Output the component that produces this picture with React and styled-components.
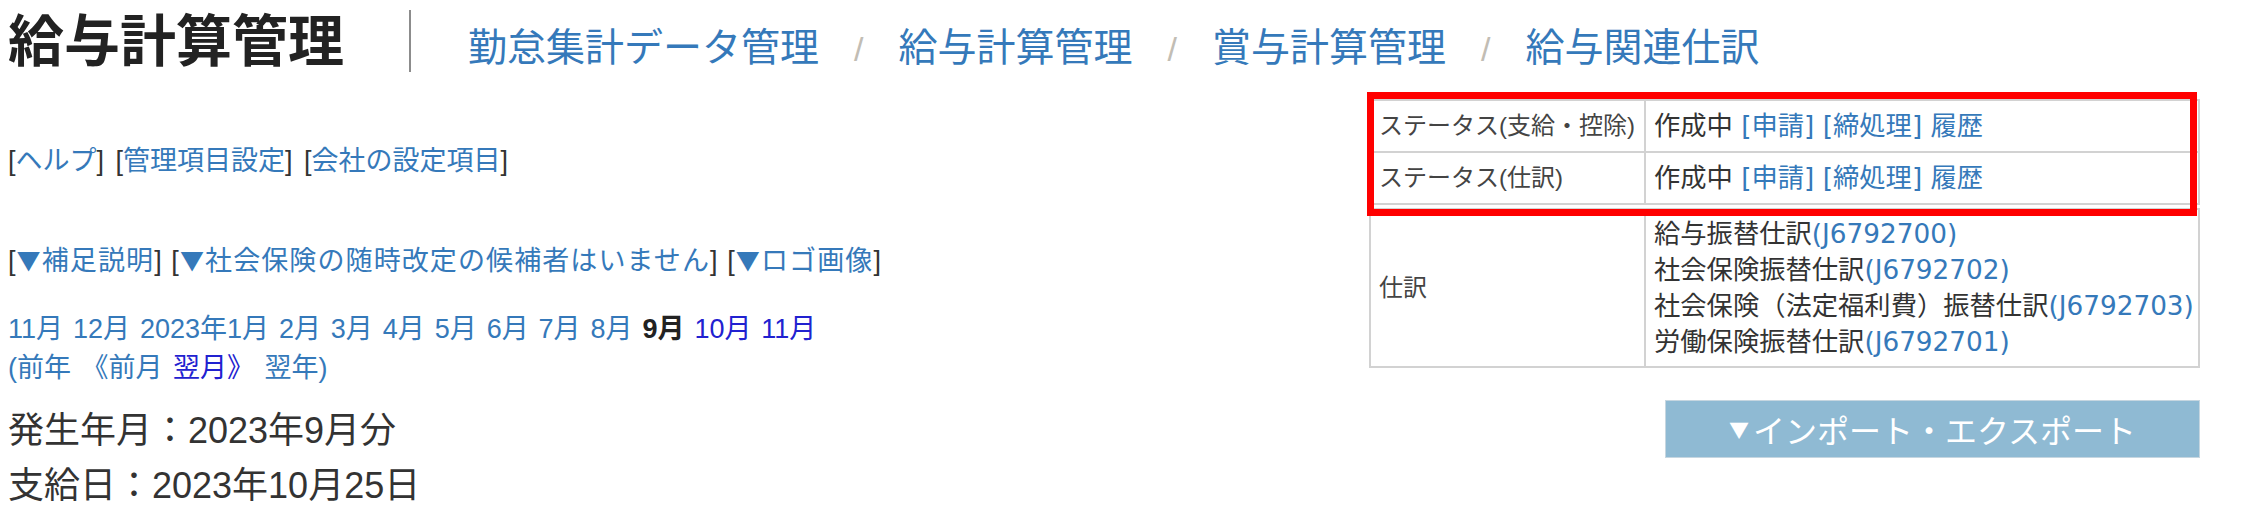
import styled, { createGlobalStyle } from 'styled-components'

const GlobalStyle = createGlobalStyle`
  body {
    margin: 0;
    background: #fff;
    color: #333;
    font-family: 'Liberation Sans', 'Noto Sans CJK JP', sans-serif;
  }
`

const Page = styled.div`
  width: 2241px;
  box-sizing: border-box;
  padding: 0 41px 0 8px;
`

const Header = styled.header`
  display: flex;
  align-items: flex-start;
  height: 80px;
`

const Title = styled.h1`
  margin: 14px 0 0;
  font-size: 56px;
  line-height: 55px;
  font-weight: 700;
  color: #222;
`

const Divider = styled.div`
  width: 2px;
  height: 62px;
  margin: 10px 0 0 65px;
  background: #8c8c8c;
`

const Nav = styled.nav`
  margin: 28px 0 0 57px;
  font-size: 39px;
  line-height: 39px;
  white-space: nowrap;
`

const NavLink = styled.a`
  color: #3579ba;
  text-decoration: none;
`

const Sep = styled.span`
  margin: 0 35px;
  font-size: 34px;
  color: #c2bdb4;
`

const Body = styled.div`
  display: flex;
  justify-content: space-between;
  align-items: flex-start;
`

const LeftColumn = styled.div`
  padding-top: 62px;
  font-size: 27px;
  line-height: 39px;
  white-space: nowrap;
`

const Line = styled.div`
  margin-top: ${(p) => p.$gap || 0}px;
  word-spacing: ${(p) => p.$spread || 0}px;
  letter-spacing: ${(p) => p.$track || 0}px;
`

const Link = styled.a`
  color: ${(p) => (p.$dark ? '#2121d0' : '#3579ba')};
  text-decoration: none;
`

const Tri = styled.span`
  font-family: 'Noto Sans CJK JP', sans-serif;
  font-size: 24px;
`

const Current = styled.b`
  color: #222;
`

const Info = styled.div`
  margin-top: 15px;
  font-size: 36px;
  line-height: 55px;
  color: #333;
`

const Panel = styled.div`
  position: relative;
  width: 831px;
  margin-top: 19px;
`

const Table = styled.table`
  width: 100%;
  border-collapse: collapse;
  table-layout: fixed;
  margin-top: ${(p) => p.$gap || 0}px;
`

const Label = styled.td`
  width: 275px;
  box-sizing: border-box;
  border: 2px solid #d2d2d2;
  padding: ${(p) => (p.$tall ? '6px' : '7px')} 8px;
  font-size: 24px;
  line-height: 36px;
  color: #444;
  vertical-align: middle;
  white-space: nowrap;
`

const Value = styled.td`
  border: 2px solid #d2d2d2;
  padding: ${(p) => (p.$tall ? '6px' : '7px')} 8px;
  font-family: 'DejaVu Sans', 'Noto Sans CJK JP', sans-serif;
  font-size: 26.3px;
  line-height: 36px;
  color: #333;
  white-space: nowrap;
`

const Highlight = styled.div`
  position: absolute;
  top: -7px;
  left: -2px;
  right: 3px;
  height: 124px;
  box-sizing: border-box;
  border: 7px solid #ff0000;
  pointer-events: none;
`

const ButtonRow = styled.div`
  display: flex;
  justify-content: flex-end;
  margin-top: 32px;
`

const Button = styled.button`
  width: 535px;
  height: 58px;
  display: flex;
  align-items: center;
  justify-content: center;
  border: 1px solid #c6d6e0;
  background: #8fbad3;
  color: #fff;
  font-family: 'Noto Sans CJK JP', sans-serif;
  font-size: 32px;
  padding: 0;
`

const Caret = styled.span`
  font-size: 20px;
  margin-right: 4px;
`

const months = ['2月', '3月', '4月', '5月', '6月', '7月', '8月']

const StatusLinks = () => (
  <>
    作成中 <Link>[申請]</Link> <Link>[締処理]</Link> <Link>履歴</Link>
  </>
)

const journals = [
  ['給与振替仕訳', 'J6792700'],
  ['社会保険振替仕訳', 'J6792702'],
  ['社会保険（法定福利費）振替仕訳', 'J6792703'],
  ['労働保険振替仕訳', 'J6792701'],
]

const App = () => {
  return (
    <Page>
      <GlobalStyle />
      <Header>
        <Title>給与計算管理</Title>
        <Divider />
        <Nav>
          <NavLink>勤怠集計データ管理</NavLink>
          <Sep>/</Sep>
          <NavLink>給与計算管理</NavLink>
          <Sep>/</Sep>
          <NavLink>賞与計算管理</NavLink>
          <Sep>/</Sep>
          <NavLink>給与関連仕訳</NavLink>
        </Nav>
      </Header>
      <Body>
        <LeftColumn>
          <Line $spread={4}>
            [<Link>ヘルプ</Link>] [<Link>管理項目設定</Link>] [<Link>会社の設定項目</Link>]
          </Line>
          <Line $gap={59} $track={1.1}>
            [<Link><Tri>▼</Tri>補足説明</Link>] [<Link><Tri>▼</Tri>社会保険の随時改定の候補者はいません</Link>] [
            <Link><Tri>▼</Tri>ロゴ画像</Link>]
          </Line>
          <Line $gap={29} $spread={2.4}>
            <Link>11月</Link> <Link>12月</Link> <Link>2023年1月</Link>{' '}
            {months.map((m) => (
              <span key={m}>
                <Link>{m}</Link>{' '}
              </span>
            ))}
            <Current>9月</Current> <Link $dark>10月</Link> <Link $dark>11月</Link>
          </Line>
          <Line $spread={3}>
            <Link>(前年</Link> <Link>《前月</Link> <Link $dark>翌月》</Link> <Link>翌年)</Link>
          </Line>
          <Info>
            <div>発生年月：2023年9月分</div>
            <div>支給日：2023年10月25日</div>
          </Info>
        </LeftColumn>
        <Panel>
          <Table>
            <tbody>
              <tr>
                <Label>ステータス(支給・控除)</Label>
                <Value>
                  <StatusLinks />
                </Value>
              </tr>
              <tr>
                <Label>ステータス(仕訳)</Label>
                <Value>
                  <StatusLinks />
                </Value>
              </tr>
            </tbody>
          </Table>
          <Table $gap={3}>
            <tbody>
              <tr>
                <Label $tall>仕訳</Label>
                <Value $tall>
                  {journals.map(([name, code]) => (
                    <div key={code}>
                      {name}
                      <Link>({code})</Link>
                    </div>
                  ))}
                </Value>
              </tr>
            </tbody>
          </Table>
          <Highlight />
          <ButtonRow>
            <Button>
              <Caret>▼</Caret>インポート・エクスポート
            </Button>
          </ButtonRow>
        </Panel>
      </Body>
    </Page>
  )
}

export default App
